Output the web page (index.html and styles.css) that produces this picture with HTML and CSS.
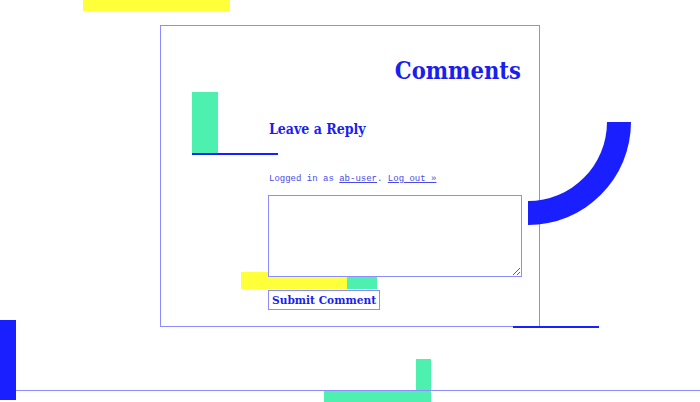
FILE: index.html
```html
<!DOCTYPE html>
<html lang="en">
<head>
<meta charset="utf-8">
<title>Comments</title>
<link rel="stylesheet" href="styles.css">
</head>
<body>
<div class="deco deco-yellow-top"></div>
<div class="deco deco-green-left"></div>
<div class="deco deco-line-left"></div>
<svg class="deco deco-arc" width="104" height="104" viewBox="0 0 104 104"><path d="M79 0 H103 A103 103 0 0 1 0 103 V79 A79 79 0 0 0 79 0 Z" fill="#1a1fff"/></svg>
<div class="deco deco-line-right"></div>
<div class="deco deco-yellow-mid"></div>
<div class="deco deco-green-mid"></div>
<div class="deco deco-blue-bar"></div>
<div class="deco deco-floor"></div>
<div class="deco deco-green-bottom"></div>
<div class="deco deco-green-post"></div>

<section class="frame">
  <h2 class="title">Comments</h2>
  <div class="reply">
    <h3 class="reply-title">Leave a Reply</h3>
    <p class="logged">Logged in as <a href="#">ab-user</a>. <a href="#">Log out »</a></p>
    <textarea class="comment-box"></textarea>
    <button class="submit" type="button">Submit Comment</button>
  </div>
</section>
</body>
</html>
```
FILE: styles.css
```css
html, body {
  margin: 0;
  padding: 0;
  background: #ffffff;
}
body {
  position: relative;
  width: 700px;
  height: 402px;
  overflow: hidden;
  font-family: "DejaVu Serif", "Liberation Serif", serif;
  font-stretch: condensed;
  color: #1a1fff;
}
.frame {
  position: relative;
  z-index: 2;
  margin: 25px 0 0 160px;
  width: 380px;
  height: 302px;
  box-sizing: border-box;
  border: 1px solid #8c8cff;
  padding: 31px 18px 0 107px;
}
.title {
  margin: 0;
  text-align: right;
  font-size: 23.5px;
  line-height: 28px;
  font-weight: bold;
  font-stretch: condensed;
  color: #1a1fee;
}
.reply {
  display: flex;
  flex-direction: column;
  align-items: flex-start;
}
.reply-title {
  margin: 34px 0 0 1px;
  font-size: 14px;
  line-height: 20px;
  font-weight: bold;
  font-stretch: condensed;
  color: #1a1fee;
}
.logged {
  margin: 35px 0 0 1px;
  font-family: "Liberation Mono", "DejaVu Sans Mono", monospace;
  font-stretch: normal;
  font-size: 9px;
  line-height: 11px;
  color: #4a4ae6;
}
.logged a {
  color: #4a4ae6;
}
.comment-box {
  margin: 10px 0 0 0;
  width: 254px;
  height: 82px;
  box-sizing: border-box;
  border: 1px solid #8c8cff;
  background: #ffffff;
  resize: vertical;
  padding: 0;
  position: relative;
  z-index: 3;
}
.submit {
  margin: 13px 0 0 0;
  height: 20px;
  box-sizing: border-box;
  border: 1px solid #8c8cff;
  background: #ffffff;
  padding: 0 3px;
  white-space: nowrap;
  font-family: "DejaVu Serif", "Liberation Serif", serif;
  font-stretch: condensed;
  font-size: 11.8px;
  font-weight: bold;
  color: #1a1fee;
  line-height: 16px;
  position: relative;
  z-index: 3;
}
.deco {
  position: absolute;
  display: block;
}
.deco-yellow-top {
  left: 83px; top: 0; width: 147px; height: 11px;
  background: #ffff3a;
}
.deco-green-left {
  left: 192px; top: 92px; width: 26px; height: 62px;
  background: #4ef0b0;
  z-index: 3;
}
.deco-line-left {
  left: 192px; top: 153px; width: 86px; height: 2px;
  background: #1a1fff;
  z-index: 3;
}
.deco-arc {
  left: 528px; top: 122px;
  z-index: 3;
}
.deco-line-right {
  left: 513px; top: 326px; width: 86px; height: 2px;
  background: #1a1fff;
  z-index: 3;
}
.deco-yellow-mid {
  left: 241px; top: 272px; width: 106px; height: 17px;
  background: #ffff3a;
  z-index: 2;
}
.deco-green-mid {
  left: 347px; top: 272px; width: 30px; height: 17px;
  background: #4ef0b0;
  z-index: 2;
}
.deco-blue-bar {
  left: 0; top: 320px; width: 16px; height: 80px;
  background: #1a1fff;
}
.deco-floor {
  left: 16px; top: 390px; width: 684px; height: 1px;
  background: #8c8cff;
  z-index: 2;
}
.deco-green-bottom {
  left: 324px; top: 390px; width: 107px; height: 12px;
  background: #4ef0b0;
}
.deco-green-post {
  left: 416px; top: 359px; width: 15px; height: 31px;
  background: #4ef0b0;
}
```
